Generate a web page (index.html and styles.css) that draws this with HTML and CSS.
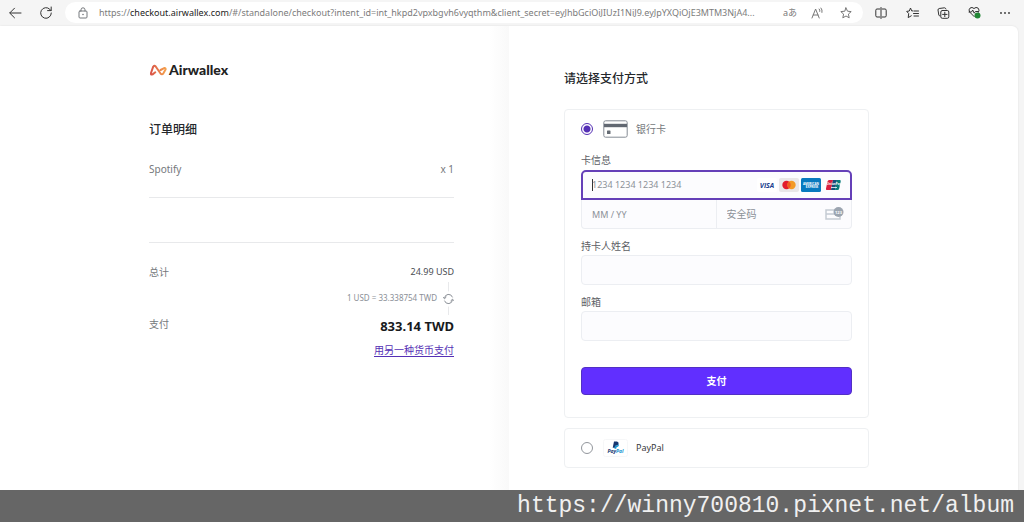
FILE: index.html
```html
<!DOCTYPE html>
<html lang="zh-CN">
<head>
<meta charset="utf-8">
<meta name="viewport" content="width=device-width, initial-scale=1">
<title>Airwallex</title>
<link rel="stylesheet" href="styles.css">
</head>
<body>
<header class="toolbar">
  <nav class="nav-buttons">
    <button class="icon-button" aria-label="Back"><svg width="14" height="14" viewBox="0 0 14 14"><path d="M13 7H2M6.5 2.2 1.7 7l4.8 4.8"/></svg></button>
    <button class="icon-button" aria-label="Refresh"><svg width="14" height="14" viewBox="0 0 14 14"><path d="M12.3 7A5.3 5.3 0 1 1 10.8 3.3L12 4.5M12.2 1v3.6H8.6"/></svg></button>
  </nav>
  <div class="address">
    <svg class="lock" width="12" height="12" viewBox="0 0 12 12"><rect x="2" y="4" width="8" height="7" rx="1"/><path d="M4 4V2.8a2 2 0 0 1 4 0V4"/><circle class="fill" cx="6" cy="7.5" r=".8"/></svg>
    <div class="url">https://<span class="host">checkout.airwallex.com</span>/#/standalone/checkout?intent_id=int_hkpd2vpxbgvh6vyqthm&amp;client_secret=eyJhbGciOiJIUzI1NiJ9.eyJpYXQiOjE3MTM3NjA4...</div>
    <div class="address-tools">
      <button class="icon-button translate" aria-label="Translate">aあ</button>
      <button class="icon-button" aria-label="Read aloud"><svg width="14" height="12" viewBox="0 0 14 12"><path d="m1 11 3.6-9 3.6 9M2.2 8H7M8.2 2q1 1 .6 2.4M10 1q1.6 1.8 1 4.4"/></svg></button>
      <button class="icon-button" aria-label="Favorite"><svg width="12" height="12" viewBox="0 0 12 12"><path d="m6 .9 1.500 3.300 3.700.4-2.800 2.500.8 3.700L6 9 2.800 10.800l.8-3.700L.8 4.600l3.700-.4z"/></svg></button>
    </div>
  </div>
  <div class="browser-tools">
    <button class="icon-button" aria-label="Split screen"><svg width="12" height="12" viewBox="0 0 12 12"><path d="M4.8 2H2Q.8 2 .8 3.2v5.6Q.8 10 2 10h2.8M7.2 2H10q1.2 0 1.2 1.2v5.6Q11.2 10 10 10H7.2M6 .5v11"/></svg></button>
    <button class="icon-button" aria-label="Favorites"><svg width="13" height="12" viewBox="0 0 13 12"><path d="M6.800 3.900H5.700L4.500 1 3.300 4 .7 4.400l2 2.200-.5 4 3.100-1.800M8 4h4.500M7.500 6.500h5M8 9h4.500"/></svg></button>
    <button class="icon-button" aria-label="Collections"><svg width="13" height="12" viewBox="0 0 13 12"><path d="M3 9Q2 9 1.8 8L1 3q0-1.300 1.200-1.500L7.500.8q1 0 1.500 1.200"/><rect x="3.800" y="3.500" width="8" height="7.800" rx="1.500"/><path d="M7.800 5.200v4.400M5.600 7.400H10"/></svg></button>
    <button class="icon-button" aria-label="Browser essentials"><svg width="13" height="13" viewBox="0 0 13 13"><path d="M6.200 10.600 1.700 6.100Q.2 3.700 2 2.100q2-1.500 4 .4 2-1.900 4.100-.4 1.800 1.800.4 4.200M1 6h2.500l1.200-2 1.500 3.200 1.200-1.700H10"/><circle class="status" cx="9.500" cy="9.400" r="3"/></svg></button>
    <button class="icon-button" aria-label="More"><svg width="12" height="12" viewBox="0 0 12 12"><circle class="fill" cx="2" cy="6" r=".9"/><circle class="fill" cx="6" cy="6" r=".9"/><circle class="fill" cx="10" cy="6" r=".9"/></svg></button>
  </div>
</header>

<main class="page">
  <section class="summary">
    <div class="column">
      <div class="logo">
        <svg width="18" height="14" viewBox="0 0 18 14" aria-hidden="true">
          <defs><linearGradient id="brand" x1="0" x2="1"><stop offset="0" stop-color="#d95348"/><stop offset="1" stop-color="#f5a14c"/></linearGradient></defs>
          <path stroke="url(#brand)" d="M6.300 9.300 3.600 11.400Q1.500 12.200 2 10L4.200 3.700Q5.200 1.800 6.700 3.500L11.400 10.300Q13 12.200 14.400 10.300L16.600 6.600Q17 4.800 15.200 5.100L11.600 7"/>
        </svg>
        <span>Airwallex</span>
      </div>
      <h1 class="title order-title">订单明细</h1>
      <div class="row item"><span>Spotify</span><span>x 1</span></div>
      <div class="row total"><span>总计</span><span class="amount">24.99 USD</span></div>
      <div class="rate"><span>1 USD = 33.338754 TWD</span><svg width="11" height="33" viewBox="0 0 11 33"><path class="connector" d="M5.500 0v9M5.500 25v8"/><path d="M1.500 16a4.100 4.100 0 0 1 7.900-1M9.500 18a4.100 4.100 0 0 1-7.900 1M0 15.200l1.600 1.500 1.500-1.500M7.900 18.700l1.600-1.500 1.500 1.500"/></svg></div>
      <div class="row pay"><span>支付</span><strong class="grand">833.14 TWD</strong></div>
      <a class="currency" href="#">用另一种货币支付</a>
    </div>
  </section>

  <section class="checkout">
    <form class="column">
      <h2 class="title">请选择支付方式</h2>
      <div class="method card-method">
        <label class="choice">
          <input type="radio" name="method" checked>
          <svg width="25" height="18" viewBox="0 0 25 18"><rect x=".8" y=".8" width="23.400" height="16.400" rx="1.800" fill="#fff" stroke="#858b94"/><path d="M1 5.500h23" stroke="#626872" stroke-width="3.400"/><rect x="4" y="10.500" width="3.500" height="3.500" rx=".6" fill="#656b73"/></svg>
          <span>银行卡</span>
        </label>
        <label class="field-label" for="number">卡信息</label>
        <div class="card-fields">
          <div class="number">
            <span class="caret"></span>
            <input id="number" type="text" placeholder="1234 1234 1234 1234">
            <span class="brands">
              <svg width="20" height="14" viewBox="0 0 20 14"><rect width="20" height="14" rx="2" fill="#fff"/><text class="visa" x="10" y="10">VISA</text></svg>
              <svg width="20" height="14" viewBox="0 0 20 14"><rect width="20" height="14" rx="2" fill="#e9e7e8"/><circle cx="7.500" cy="7" r="4.200" fill="#e21b2d"/><circle cx="12.500" cy="7" r="4.200" fill="#f39a25"/><path d="M10 3.600a4.200 4.200 0 0 1 0 6.800 4.200 4.200 0 0 1 0-6.800" fill="#f05c22"/></svg>
              <svg width="20" height="14" viewBox="0 0 20 14"><rect width="20" height="14" rx="1.500" fill="#087abf"/><text class="amex" x="10" y="6.500">AMERICAN</text><text class="amex" x="11" y="10">EXPRESS</text></svg>
              <svg width="20" height="14" viewBox="0 0 20 14"><path d="M6 2h4L8 12H4q-1.500 0-1-1.500l1.500-7Q5 2 6 2" fill="#d91f40"/><path d="M10 2h4l-2 10H8z" fill="#174f79"/><path d="M14 2h3q1 0 .7 1.500l-1.500 7Q16 12 14.500 12H12z" fill="#087c7a"/><text class="union" x="11" y="7">UnionPay</text><path d="M8 9.500h6" stroke="#fff" stroke-width=".8"/></svg>
            </span>
          </div>
          <input class="expiry" type="text" placeholder="MM / YY" aria-label="MM / YY">
          <div class="security">
            <input type="text" placeholder="安全码" aria-label="安全码">
            <svg width="19" height="15" viewBox="0 0 19 15"><rect x="1" y="3" width="14" height="9" fill="none" stroke="#c5cbd3" stroke-width="1.500"/><path d="M1 7h14" stroke="#c5cbd3" stroke-width="1.500"/><circle cx="13.500" cy="5" r="5" fill="#9ca5b0"/><text class="cvc" x="13.500" y="6.500">123</text></svg>
          </div>
        </div>
        <label class="field-label" for="holder">持卡人姓名</label>
        <input class="field" id="holder" type="text">
        <label class="field-label" for="email">邮箱</label>
        <input class="field" id="email" type="email">
        <button class="submit" type="button">支付</button>
      </div>
      <div class="method paypal-method">
        <label class="choice">
          <input type="radio" name="method">
          <svg width="25" height="18" viewBox="0 0 25 18"><rect x=".5" y=".5" width="24" height="17" rx="2" fill="#fff" stroke="#f6f7f8"/><path d="M11 2.500h3q2.200.5 1.500 2.500-.7 2-3 1.700l-.4 2H9.700z" fill="#173770"/><path d="M12 6.800q3 .3 3.700-2 .8 3-2 3.300l-.5 1.600h-1.800z" fill="#1594d1"/><text class="paypal" x="12.500" y="14"><tspan fill="#173770">Pay</tspan><tspan fill="#1594d1">Pal</tspan></text></svg>
          <span class="paypal-name">PayPal</span>
        </label>
      </div>
    </form>
  </section>
</main>
<footer class="watermark">https://winny700810.pixnet.net/album</footer>
</body>
</html>
```

FILE: styles.css
```css
* { box-sizing: border-box; }

body {
  margin: 0;
  min-height: 100vh;
  display: flex;
  flex-direction: column;
  background: #f5f5f5;
  color: #75787c;
  font: 10px/20px "Noto Sans", "Noto Sans CJK SC", sans-serif;
}

button, input { font: inherit; }
svg { display: block; flex: none; }

.toolbar {
  display: flex;
  align-items: center;
  height: 26px;
  padding: 0 12px 1px 8px;
}

.nav-buttons { display: flex; gap: 17px; padding-right: 12px; }

.icon-button {
  display: flex;
  align-items: center;
  justify-content: center;
  min-width: 14px;
  padding: 0;
  border: 0;
  background: none;
  color: #333;
}

.icon-button svg, .lock, .rate svg {
  fill: none;
  stroke: currentColor;
  stroke-width: 1;
  stroke-linecap: round;
  stroke-linejoin: round;
}

.icon-button .fill, .lock .fill { fill: currentColor; stroke: none; }
.icon-button .status { fill: #238636; stroke: none; }

.address {
  display: flex;
  flex: 1;
  align-items: center;
  min-width: 0;
  height: 21px;
  padding: 0 10px 0 12px;
  border-radius: 11px;
  background: #fff;
}

.url {
  flex: 1;
  min-width: 0;
  margin-left: 10px;
  overflow: hidden;
  white-space: nowrap;
  color: #7c7c7c;
}

.url, .amount, .choice .paypal-name, .number input, .expiry { font-size: 9px; }

.host { color: #222; }
.address-tools { display: flex; gap: 14px; }
.address-tools .icon-button { color: #777; }
.address-tools .translate { font-size: 9px; line-height: 14px; }
.browser-tools { display: flex; gap: 17px; margin-left: 11px; }

.page {
  display: grid;
  grid-template-columns: 1fr 1fr;
  flex: 1;
  margin-right: 6px;
  border-radius: 0 6px 0 0;
  background: #fff;
  box-shadow: 0 0 2px #ddd;
}

.summary {
  display: flex;
  justify-content: flex-end;
  padding: 34px 55px 32px 16px;
  background: linear-gradient(to left, #f9f9f9, #fff 20px);
}

.checkout { padding: 40px 16px 54px 55px; }
.column { width: 100%; max-width: 305px; }

.logo {
  display: flex;
  align-items: center;
  gap: 2px;
  color: #222;
  font: 900 14px/20px Lato, sans-serif;
}

.logo svg { fill: none; stroke-width: 2; stroke-linecap: round; stroke-linejoin: round; }

.title {
  margin: 0;
  color: #24272b;
  font-size: 12px;
  font-weight: 500;
  line-height: 26px;
}

.order-title { margin: 37px 0 16px; }
.row { display: flex; justify-content: space-between; }
.item { padding-bottom: 18px; border-bottom: 1px solid #e8e9eb; }
.total { margin-top: 44px; padding-top: 19px; border-top: 1px solid #e8e9eb; }
.amount { color: #4b4e53; }

.rate {
  display: flex;
  align-items: center;
  justify-content: flex-end;
  gap: 6px;
  height: 32px;
  color: #8b9097;
  font-size: 8px;
}

.rate .connector { stroke: #e8e9eb; }

.grand {
  color: #181a1d;
  font-size: 13px;
  line-height: 24px;
}

.currency {
  display: block;
  margin-top: 2px;
  color: #5530b5;
  text-align: right;
  text-underline-offset: 2px;
}

.method {
  border: 1px solid #eef0f2;
  border-radius: 4px;
  background: #fff;
}

.card-method { margin-top: 17px; padding: 9px 16px 22px; }
.paypal-method { margin-top: 10px; padding: 9px 16px; }

.choice {
  display: flex;
  align-items: center;
  height: 20px;
}

.choice span { margin-left: 8px; }
.paypal-name { color: #383b40; }

.choice input {
  appearance: none;
  flex: none;
  width: 12px;
  height: 12px;
  margin: 0 10px 0 0;
  border: 1px solid #92969c;
  border-radius: 50%;
  background: #fff;
}

.choice input:checked {
  border-color: #5530b5;
  background: radial-gradient(circle, #5530b5 3px, #fff 4px);
}

.field-label {
  display: block;
  margin-top: 8px;
  color: #5d6065;
  line-height: 18px;
}

.choice + .field-label { margin: 12px 0 1px; }

.card-fields { display: grid; grid-template-columns: 1fr 1fr; }

input::placeholder { color: #8c9198; opacity: 1; }

.number, .expiry, .security, .field {
  width: 100%;
  min-width: 0;
  height: 30px;
  padding: 0 10px;
  border: 1px solid #eceef2;
  border-radius: 4px;
  outline: 0;
  background: #fcfcfe;
}

.number {
  display: flex;
  align-items: center;
  grid-column: 1 / -1;
  padding: 0 7px 0 9px;
  border: 2px solid #6540b8;
  border-radius: 5px 5px 0 0;
}

.number input, .security input {
  flex: 1;
  width: 100%;
  min-width: 0;
  padding: 0;
  border: 0;
  outline: 0;
  background: none;
}

.caret { width: 1px; height: 12px; margin-right: -1px; background: #333; }
.brands { display: flex; gap: 2px; }

.expiry, .security { height: 29px; border-top: 0; }
.expiry { border-radius: 0 0 0 4px; }

.security {
  display: flex;
  align-items: center;
  padding-right: 7px;
  border-left: 0;
  border-radius: 0 0 4px 0;
}

.submit {
  display: block;
  width: 100%;
  height: 28px;
  margin-top: 26px;
  padding: 0;
  border: 1px solid #5230c4;
  border-radius: 4px;
  background: #612fff;
  color: #fff;
  font-weight: bold;
}

.visa, .amex, .union, .cvc, .paypal { font-family: "Open Sans", sans-serif; font-weight: bold; text-anchor: middle; }
.visa { fill: #213f8e; font-size: 7px; font-style: italic; }
.amex { fill: #fff; font-size: 3px; }
.union { fill: #fff; font-size: 3px; }
.cvc { fill: #fff; font-size: 4px; }
.paypal { font-size: 5px; font-style: italic; }

.watermark {
  position: fixed;
  right: 0;
  bottom: 0;
  left: 0;
  padding: 0 10px;
  background: #666;
  color: #f0f0f0;
  font: 23px/32px "Liberation Mono", monospace;
  text-align: right;
}
```
